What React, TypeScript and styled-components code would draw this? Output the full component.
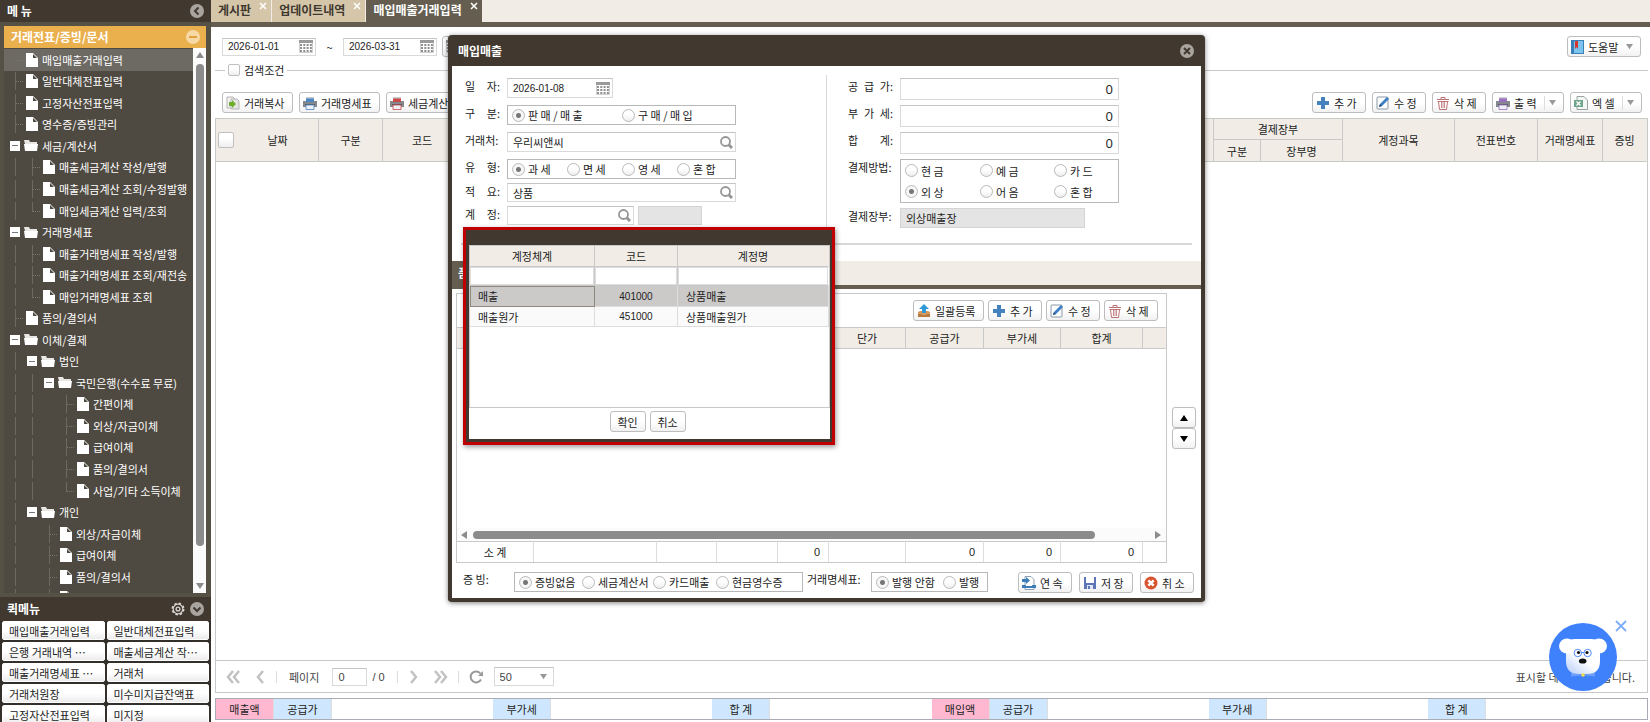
import React from 'react';
import styled, { createGlobalStyle, css } from 'styled-components';

const KOR = '"Noto Sans CJK KR", sans-serif';
const NUM = '"Liberation Sans", "Noto Sans CJK KR", sans-serif';
const DARK = '#413930';
const OLIVE = '#655e50';
const CREAM = '#f1ede6';
const LINE = '#c9c9c9';

const GlobalStyle = createGlobalStyle`
  *, *::before, *::after { box-sizing: border-box; }
  html, body { margin: 0; padding: 0; }
  body { font: 11px/14px ${KOR}; color: #222; background: #fff; overflow: hidden; }
  button, input, select { font: inherit; color: inherit; margin: 0; padding: 0; }
  button { cursor: pointer; }
  table { border-collapse: separate; border-spacing: 0; table-layout: fixed; width: 100%; }
  th { font-weight: 400; padding: 0; }
  td { padding: 0; }
  svg { display: block; flex: none; }
`;

/* ---------- icons ---------- */

const CircleIcon = ({ d, bg = '#a9a49d', fg = DARK }: { d: string; bg?: string; fg?: string }) => (
  <svg width="14" height="14" viewBox="0 0 14 14">
    <circle cx="7" cy="7" r="7" fill={bg} />
    <path d={d} fill="none" stroke={fg} strokeWidth="2" />
  </svg>
);

const GearIcon = () => (
  <svg width="14" height="14" viewBox="0 0 14 14" fill="none" stroke="#d8d5d0">
    <circle cx="7" cy="7" r="5.6" strokeWidth="1.8" strokeDasharray="2.4 2" />
    <circle cx="7" cy="7" r="4.8" strokeWidth="1.2" />
    <circle cx="7" cy="7" r="1.9" strokeWidth="1.3" />
  </svg>
);

const DocIcon = () => (
  <svg width="12" height="14" viewBox="0 0 12 14">
    <path d="M0 0h7l5 5v9H0z" fill="#fff" />
    <path d="M7 1v4h4z" fill="#4f4a41" />
  </svg>
);

const FolderIcon = () => (
  <svg width="14" height="11" viewBox="0 0 14 11">
    <path d="M0 0h5l1 2h7v2H1z" fill="#e9e7e4" />
    <path d="M0 4h14l-1 7H1z" fill="#fff" />
  </svg>
);

const CalendarIcon = () => (
  <svg width="14" height="13" viewBox="0 0 14 13">
    <path d="M0 0h14v3H0z" fill="#9a9a9a" />
    <path d="M.5 3v9.500h13V3" fill="none" stroke="#cfcfcf" />
    {[4, 7, 10].map((y) => (
      <path key={y} d={`M1 ${y + 1}h12`} stroke="#8f8f8f" strokeWidth="2" strokeDasharray="2 1.300" />
    ))}
  </svg>
);

const SearchIcon = () => (
  <svg width="13" height="13" viewBox="0 0 13 13" fill="none" stroke="#969696">
    <circle cx="5.500" cy="5.500" r="4.500" strokeWidth="1.800" />
    <path d="M8.500 8.500l3.500 3.500" strokeWidth="3" />
  </svg>
);

const PlusIcon = () => (
  <svg width="14" height="14" viewBox="0 0 14 14">
    <path d="M5 1h4v4h4v4H9v4H5V9H1V5h4z" fill="#4582bd" />
  </svg>
);

const EditIcon = () => (
  <svg width="14" height="14" viewBox="0 0 14 14">
    <rect x="1" y="1" width="11" height="12" rx="1" fill="#fafcfe" stroke="#8c98a3" />
    <path d="M3 11l1-3 7-7 2 2-7 7z" fill="#3d7fc4" />
    <path d="M3 11l1-3 2 2z" fill="#28496e" />
  </svg>
);

const TrashIcon = () => (
  <svg width="14" height="14" viewBox="0 0 14 14" fill="none" stroke="#bd7376">
    <path d="M1 3.500h12M5 3V1.500h4V3M2.500 5.500l1 8h7l1-8z" />
    <path d="M5.500 6v6M8.500 6v6M7 6v6" strokeWidth=".8" />
    <path d="M1.500 5.500h11" />
  </svg>
);

const PrinterIcon = ({ color }: { color: string }) => (
  <svg width="14" height="14" viewBox="0 0 14 14">
    <path d="M3 1h8v5H3z" fill={color} />
    <path d="M3 1h8v1.500H3z" fill="#c9ccd0" />
    <path d="M0 5h3v1h8V5h3v6H0z" fill="#85888c" />
    <path d="M2 8h10v1H2z" fill="#55585c" />
    <path d="M3 9h8v4.500H3z" fill="#eef2f8" stroke={color} strokeWidth=".8" />
  </svg>
);

const CopyIcon = () => (
  <svg width="14" height="14" viewBox="0 0 14 14">
    <path d="M1 1h6l2 2v9H1z" fill="#f1f1f1" stroke="#b5b5b5" />
    <path d="M5 3h6l2 2v8H5z" fill="#e3e6e2" stroke="#b5b5b5" />
    <path d="M3 6h3V4l4 4-4 4v-2H3z" fill="#6fae2c" />
  </svg>
);

const ExcelIcon = () => (
  <svg width="14" height="14" viewBox="0 0 14 14">
    <path d="M3 .5h7L13.500 4v9.500H3z" fill="#f5f7f6" stroke="#9aa39d" />
    <path d="M0 4h9v7H0z" fill="#6fa58b" />
    <path d="M2.500 5.500l4 4M6.500 5.500l-4 4" stroke="#fff" strokeWidth="1.300" />
  </svg>
);

const BookIcon = () => (
  <svg width="13" height="14" viewBox="0 0 13 14">
    <rect x=".5" y=".5" width="12" height="13" fill="#7cc4ee" stroke="#3b7fb8" />
    <path d="M1 1h2v12H1z" fill="#3b7fb8" />
    <path d="M4 1h3v8L5.500 7 4 9z" fill="#d5352c" />
  </svg>
);

const UploadIcon = () => (
  <svg width="14" height="14" viewBox="0 0 14 14">
    <path d="M1 8l2-1h8l2 1v5H1z" fill="#d59a5b" />
    <path d="M1 10h3l1 1h4l1-1h3v3H1z" fill="#b97a3d" />
    <path d="M7 0l5 5H9v4H5V5H2z" fill="#2f9ad6" />
  </svg>
);

const ContinueIcon = () => (
  <svg width="14" height="14" viewBox="0 0 14 14">
    <path d="M3 .5h6l3 3v10H3z" fill="#fff" stroke="#8aa0b5" />
    <path d="M0 3h4V1l4 3.500L4 8V6H0z" fill="#3d7db8" />
    <path d="M0 9h14v3H0z" fill="#3d7db8" />
    <path d="M4 9h6v1H4z" fill="#fff" />
  </svg>
);

const SaveIcon = () => (
  <svg width="14" height="14" viewBox="0 0 14 14">
    <path d="M1 1h12v12H1z" fill="#5b75b8" />
    <path d="M3 1h8v6H3z" fill="#fff" />
    <path d="M4 9h6v4H4z" fill="#dfe5f3" />
    <path d="M5 10h2v3H5z" fill="#5b75b8" />
  </svg>
);

const CancelIcon = () => (
  <svg width="14" height="14" viewBox="0 0 14 14">
    <circle cx="7" cy="7" r="6.500" fill="#d9532f" />
    <path d="M4.300 4.300l5.400 5.400M9.700 4.300L4.300 9.700" stroke="#fff" strokeWidth="2.400" />
  </svg>
);

const Caret = ({ dir = 'down', size = 7, color = '#999' }: { dir?: string; size?: number; color?: string }) => {
  const d: Record<string, string> = {
    down: 'M0 1h8L4 7z',
    up: 'M0 7h8L4 1z',
    left: 'M7 0v8L1 4z',
    right: 'M1 0v8l6-4z',
  };
  return (
    <svg width={size} height={size} viewBox="0 0 8 8">
      <path d={d[dir]} fill={color} />
    </svg>
  );
};

const PageArrow = ({ d, w }: { d: string; w: number }) => (
  <svg width={w} height="14" viewBox={`0 0 ${w} 14`} fill="none" stroke="#c2c2c2" strokeWidth="2.500">
    <path d={d} />
  </svg>
);

const RefreshIcon = () => (
  <svg width="15" height="14" viewBox="0 0 15 14">
    <path d="M11.500 3.500A5.500 5.500 0 1 0 12 9.500" fill="none" stroke="#999" strokeWidth="2" />
    <path d="M14 1v5H9z" fill="#999" />
  </svg>
);

const Mascot = () => (
  <svg width="68" height="68" viewBox="0 0 68 68">
    <defs>
      <linearGradient id="face" x1=".7" y1=".3" x2=".2" y2="1">
        <stop offset="0.4" stopColor="#fff" />
        <stop offset="1" stopColor="#c3d5fb" />
      </linearGradient>
    </defs>
    <circle cx="34" cy="34" r="34" fill="#3f80fb" />
    <path d="M22 49l12 3 12-3v4.500l-12-1-12 1z" fill="#6a9dfc" />
    <path d="M17 22q2-6 8-6h18q6 0 8 6v16q0 13-13 13h-8q-13 0-13-13z" fill="url(#face)" />
    <ellipse cx="18" cy="23" rx="8" ry="7.500" fill="#fff" />
    <ellipse cx="50" cy="23" rx="8" ry="7.500" fill="#fff" />
    <g fill="#fff" stroke="#3f80fb" strokeWidth=".9">
      <circle cx="28.800" cy="30" r="3.700" />
      <circle cx="38.600" cy="30" r="3.700" />
      <path d="M32.500 29.500h2.400" />
    </g>
    <circle cx="29.500" cy="29.500" r="1.600" fill="#111" />
    <circle cx="38" cy="29.500" r="1.600" fill="#111" />
    <ellipse cx="33.700" cy="38" rx="3.800" ry="2.600" fill="#111" />
    <circle cx="34" cy="52" r="1.800" fill="#f3dc4c" />
  </svg>
);

/* ---------- shared controls ---------- */

const Button = styled.button<{ $w?: number; $center?: boolean }>`
  display: flex;
  align-items: center;
  justify-content: ${(p) => (p.$center ? 'center' : 'flex-start')};
  gap: 4px;
  flex: none;
  height: 21px;
  width: ${(p) => (p.$w ? `${p.$w}px` : 'auto')};
  padding: 0 ${(p) => (p.$center ? 0 : 3)}px;
  border: 1px solid #bdbdbd;
  border-radius: 3px;
  background: linear-gradient(#fff 50%, #f1f1f1);
  white-space: nowrap;
`;

const ButtonCaret = styled.span<{ $split?: boolean }>`
  display: flex;
  align-items: center;
  height: 14px;
  margin-left: auto;
  padding: 0 4px;
  border-left: ${(p) => (p.$split ? '1px solid #ddd' : '0')};
`;

const IconButton = styled.button`
  display: flex;
  flex: none;
  border: 0;
  background: none;
`;

const fieldBox = css`
  border: 1px solid #d9d9d9;
  border-top-color: #c4c4c4;
  background: #fff;
`;

const Field = styled.div<{ $w?: number; $h: number }>`
  ${fieldBox}
  display: flex;
  align-items: center;
  flex: none;
  width: ${(p) => (p.$w ? `${p.$w}px` : 'auto')};
  height: ${(p) => p.$h}px;
  padding: 0 2px 0 5px;
`;

const FieldInput = styled.input<{ $num?: boolean }>`
  flex: 1;
  min-width: 0;
  height: 100%;
  border: 0;
  outline: 0;
  background: none;
  ${(p) => p.$num && `font-family: ${NUM}; font-size: 10px;`}
`;

const AmountInput = styled.input`
  ${fieldBox}
  width: 219px;
  height: 22px;
  padding: 0 5px;
  text-align: right;
  font: 13px/20px "Open Sans", sans-serif;
`;

const ReadonlyInput = styled.input<{ $w: number; $h: number }>`
  width: ${(p) => p.$w}px;
  height: ${(p) => p.$h}px;
  padding: 0 5px;
  border: 1px solid #d4d4d4;
  background: #e4e4e4;
`;

const Tick = styled.input<{ $size: number }>`
  appearance: none;
  flex: none;
  display: block;
  width: ${(p) => p.$size}px;
  height: ${(p) => p.$size}px;
  border: 1px solid #c0c0c0;
  border-radius: 2px;
  background: linear-gradient(#fff 40%, #eee);
`;

const RadioInput = styled.input`
  appearance: none;
  flex: none;
  width: 13px;
  height: 13px;
  border: 1px solid #b9b9b9;
  border-radius: 50%;
  background: linear-gradient(#fff 40%, #eee);
  &:checked {
    background: radial-gradient(circle, #777 0 2px, #f6f6f6 3px);
  }
`;

const RadioLabel = styled.label`
  display: flex;
  align-items: center;
  gap: 3px;
  white-space: nowrap;
`;

const RadioBox = styled.div<{ $cols: string; $w: number; $h?: number }>`
  display: grid;
  grid-template-columns: ${(p) => p.$cols};
  align-items: center;
  flex: none;
  width: ${(p) => p.$w}px;
  height: ${(p) => p.$h ?? 20}px;
  padding-left: 4px;
  border: 1px solid #b8b8b8;
`;

type RadiosProps = { name: string; items: string[]; value: string; cols: string; w: number; h?: number };
const Radios = ({ name, items, value, cols, w, h }: RadiosProps) => (
  <RadioBox role="radiogroup" aria-label={name} $cols={cols} $w={w} $h={h}>
    {items.map((t) => (
      <RadioLabel key={t}>
        <RadioInput type="radio" name={name} defaultChecked={t === value} />
        {t}
      </RadioLabel>
    ))}
  </RadioBox>
);

const DateField = ({ id, label, value, w, h }: { id: string; label?: string; value: string; w: number; h: number }) => (
  <Field $w={w} $h={h}>
    <FieldInput id={id} aria-label={label} $num defaultValue={value} />
    <IconButton type="button" aria-label="달력"><CalendarIcon /></IconButton>
  </Field>
);

/* ---------- shell ---------- */

const Shell = styled.div`
  display: grid;
  grid-template-columns: 211px 1fr;
  height: 100vh;
  overflow: hidden;
`;

const Sidebar = styled.aside`
  display: flex;
  flex-direction: column;
  min-height: 0;
  background: #555145;
  color: #fff;
`;

const SideHeader = styled.header<{ $h: number }>`
  display: flex;
  align-items: center;
  gap: 5px;
  flex: none;
  height: ${(p) => p.$h}px;
  padding: 0 7px;
  background: ${DARK};
  h2 { flex: 1; margin: 0; font-size: 12px; line-height: 16px; font-weight: 700; }
`;

const Accordion = styled.section`
  display: flex;
  flex-direction: column;
  flex: 1;
  min-height: 0;
  margin: 4px 5px 4px 4px;
`;

const AccordionTitle = styled.button`
  display: flex;
  align-items: center;
  justify-content: space-between;
  flex: none;
  height: 22px;
  padding: 0 6px 0 7px;
  border: 0;
  background: #eab04e;
  font-size: 12px;
  font-weight: 700;
`;

const TreeArea = styled.div`
  display: flex;
  flex: 1;
  min-height: 0;
  background: #4f4a41;
`;

const TreeClip = styled.div`
  flex: 1;
  min-width: 0;
  overflow: hidden;
`;

const TreeList = styled.ul`
  display: grid;
  grid-auto-rows: 1fr;
  height: 561px;
  margin: 0;
  padding: 1px 0 0;
  list-style: none;
`;

const TreeRow = styled.li<{ $on?: boolean }>`
  display: flex;
  align-items: center;
  padding-left: 3px;
  overflow: hidden;
  white-space: nowrap;
  background: ${(p) => (p.$on ? '#6d6a64' : 'none')};
  a { color: #fff; text-decoration: none; }
`;

const Guide = styled.span<{ $kind: string }>`
  flex: none;
  width: 17px;
  height: 18px;
  background:
    ${(p) => (p.$kind === 'T' || p.$kind === 'L'
      ? 'repeating-linear-gradient(90deg, #7a756b 0 1px, transparent 1px 2px) 9px 9px / 7px 1px no-repeat,' : '')}
    linear-gradient(#6e695f, #6e695f) 8px 0 / ${(p) => (p.$kind === '.' ? '0px' : '1px')}
    ${(p) => (p.$kind === 'L' ? '10px' : '18px')} no-repeat;
`;

const Toggle = styled.button`
  flex: none;
  display: grid;
  place-items: center;
  width: 10px;
  height: 10px;
  margin: 0 4px 0 3px;
  border: 0;
  background: #fff;
  &::before { content: ''; width: 6px; height: 1px; background: #777; }
`;

const TreeIcon = styled.span<{ $doc: boolean }>`
  display: flex;
  flex: none;
  width: 18px;
  padding-left: ${(p) => (p.$doc ? 2 : 0)}px;
`;

const ScrollY = styled.div`
  display: flex;
  flex-direction: column;
  align-items: center;
  gap: 5px;
  width: 13px;
  padding: 3px 0;
  background: #fbfbfb;
`;

const ScrollYTrack = styled.div`
  flex: 1;
  display: flex;
  &::before { content: ''; width: 8px; height: 94%; border-radius: 4px; background: #8b8b8b; }
`;

const QuickMenu = styled.section`
  flex: none;
  height: 125px;
  overflow: hidden;
  background: #33302b;
`;

const QuickGrid = styled.div`
  display: grid;
  grid-template-columns: repeat(2, minmax(0, 1fr));
  gap: 2px;
  padding: 0 2px;
`;

const QuickButton = styled.button`
  height: 19px;
  padding: 0 6px;
  border: 1px solid #fff;
  border-radius: 2px;
  background: linear-gradient(#fff 50%, #ececec);
  color: #222;
  text-align: left;
  white-space: nowrap;
`;

/* V: line, T: branch, L: last branch, '.': blank; folders end in a toggle */
const tree: [string, string, boolean?][] = [
  ['T', '매입매출거래입력'],
  ['T', '일반대체전표입력'],
  ['T', '고정자산전표입력'],
  ['T', '영수증/증빙관리'],
  ['', '세금/계산서', true],
  ['VT', '매출세금계산 작성/발행'],
  ['VT', '매출세금계산 조회/수정발행'],
  ['VL', '매입세금계산 입력/조회'],
  ['', '거래명세표', true],
  ['VT', '매출거래명세표 작성/발행'],
  ['VT', '매출거래명세표 조회/재전송'],
  ['VL', '매입거래명세표 조회'],
  ['T', '품의/결의서'],
  ['', '이체/결제', true],
  ['V', '법인', true],
  ['VV', '국민은행(수수료 무료)', true],
  ['VV.T', '간편이체'],
  ['VV.T', '외상/자금이체'],
  ['VV.T', '급여이체'],
  ['VV.T', '품의/결의서'],
  ['VV.L', '사업/기타 소득이체'],
  ['V', '개인', true],
  ['V.T', '외상/자금이체'],
  ['V.T', '급여이체'],
  ['V.T', '품의/결의서'],
  ['V.L', ''],
];

const quick = [
  '매입매출거래입력', '일반대체전표입력', '은행 거래내역 ⋯', '매출세금계산 작⋯', '매출거래명세표 ⋯',
  '거래처', '거래처원장', '미수미지급잔액표', '고정자산전표입력', '미지정',
];

const SideMenu = () => (
  <Sidebar>
    <SideHeader $h={22}>
      <h2>메 뉴</h2>
      <IconButton aria-label="메뉴 접기"><CircleIcon d="M8.500 3.500L5 7l3.500 3.500" /></IconButton>
    </SideHeader>
    <Accordion>
      <AccordionTitle>
        거래전표/증빙/문서
        <CircleIcon d="M3 7h8" bg="#f6d9a4" fg="#e0a03a" />
      </AccordionTitle>
      <TreeArea>
        <TreeClip>
          <TreeList>
            {tree.map(([guides, text, folder], i) => (
              <TreeRow key={i} $on={i === 0}>
                {guides.split('').map((g, k) => <Guide key={k} $kind={g} />)}
                {folder && <Toggle aria-label={`${text} 접기`} />}
                <TreeIcon $doc={!folder}>{folder ? <FolderIcon /> : <DocIcon />}</TreeIcon>
                {text && <a href="#menu">{text}</a>}
              </TreeRow>
            ))}
          </TreeList>
        </TreeClip>
        <ScrollY>
          <Caret dir="up" size={8} color="#8b8b8b" />
          <ScrollYTrack />
          <Caret size={8} color="#8b8b8b" />
        </ScrollY>
      </TreeArea>
    </Accordion>
    <QuickMenu>
      <SideHeader $h={24}>
        <h2>퀵메뉴</h2>
        <IconButton aria-label="설정"><GearIcon /></IconButton>
        <IconButton aria-label="퀵메뉴 접기"><CircleIcon d="M3.500 5.500L7 9l3.500-3.500" /></IconButton>
      </SideHeader>
      <QuickGrid>
        {quick.map((q) => <QuickButton key={q}>{q}</QuickButton>)}
      </QuickGrid>
    </QuickMenu>
  </Sidebar>
);

/* ---------- main page ---------- */

const Main = styled.main`
  display: flex;
  flex-direction: column;
  min-width: 0;
  min-height: 0;
`;

const TabBar = styled.nav`
  display: flex;
  gap: 1px;
  flex: none;
  height: 27px;
  border-bottom: 5px solid ${OLIVE};
  background: ${CREAM};
`;

const PageTab = styled.div<{ $on?: boolean }>`
  display: flex;
  align-items: flex-start;
  gap: 8px;
  padding: 2px 4px 0 7px;
  background: ${(p) => (p.$on ? OLIVE : '#d5c6aa')};
  a {
    color: ${(p) => (p.$on ? '#fff' : '#3f382f')};
    font-size: 12px;
    line-height: 16px;
    font-weight: 700;
    text-decoration: none;
  }
  button { display: flex; border: 0; background: none; }
`;

const CloseX = () => (
  <svg width="8" height="8" viewBox="0 0 8 8"><path d="M1 1l6 6M7 1L1 7" stroke="#fff" strokeWidth="1.500" /></svg>
);

const Content = styled.div`
  display: flex;
  flex-direction: column;
  flex: 1;
  min-height: 0;
  padding: 9px 2px 2px 4px;
`;

const SearchRow = styled.div`
  display: flex;
  align-items: center;
  gap: 5px;
  height: 21px;
  padding: 0 7px;
`;

const Tilde = styled.span`
  width: 17px;
  text-align: center;
`;

const Spacer = styled.span`
  flex: 1;
`;

const SearchFieldset = styled.fieldset`
  margin: 6px 0 0;
  padding: 0;
  border: 0;
  border-top: 1px solid ${LINE};
  legend { margin-left: 10px; padding: 0 3px; }
  label { display: flex; align-items: center; gap: 4px; }
`;

const Toolbar = styled.div`
  display: flex;
  gap: 6px;
  margin: 15px 0 5px;
  padding: 0 6px 0 7px;
`;

const GridPanel = styled.section`
  display: flex;
  flex-direction: column;
  flex: 1;
  min-height: 0;
  border: 1px solid ${LINE};
`;

const HeadTable = styled.table`
  th {
    height: 22px;
    border-right: 1px solid ${LINE};
    border-bottom: 1px solid ${LINE};
    background: ${CREAM};
    white-space: nowrap;
  }
  th:last-child { border-right-color: transparent; }
`;

const MainHead = styled(HeadTable)`
  tr:first-child th { height: 21px; }
  th.tick { border-right: 0; padding-left: 2px; }
  tr:last-child th:last-child { border-right-color: ${LINE}; }
`;

const GridBody = styled.div`
  flex: 1;
`;

const Pager = styled.div`
  display: flex;
  align-items: center;
  height: 32px;
  padding: 0 12px 0 10px;
  border-top: 1px solid ${LINE};
  color: #444;
`;

const PagerStep = styled(IconButton)<{ $ml?: number }>`
  margin-left: ${(p) => p.$ml ?? 0}px;
`;

const PagerSep = styled.span<{ $tight?: boolean }>`
  width: 1px;
  height: 12px;
  margin: 0 ${(p) => (p.$tight ? 10 : 12)}px;
  background: #ddd;
`;

const PagerLabel = styled.label`
  display: flex;
  align-items: center;
  gap: 13px;
`;

const PageInput = styled.input`
  ${fieldBox}
  width: 35px;
  height: 18px;
  padding-left: 5px;
  font: 11px ${NUM};
`;

const PageTotal = styled.span`
  margin-left: 5px;
  font: 11px ${NUM};
`;

const SizeSelect = styled.div`
  ${fieldBox}
  display: grid;
  align-items: center;
  width: 60px;
  height: 19px;
  margin-left: 10px;
  select {
    grid-area: 1 / 1;
    appearance: none;
    width: 100%;
    padding-left: 5px;
    border: 0;
    background: none;
    font: 11px ${NUM};
  }
  svg { grid-area: 1 / 1; justify-self: end; margin-right: 6px; pointer-events: none; }
`;

const Summary = styled.dl`
  display: grid;
  grid-template-columns: 58px repeat(3, 58px 1fr) 58px repeat(3, 58px 1fr);
  flex: none;
  height: 22px;
  margin: 5px 0 0;
  border: 1px solid #aaacb5;
  dd { margin: 0; }
`;

const SummaryTag = styled.dt<{ $pink?: boolean }>`
  display: grid;
  place-items: center;
  border-right: 1px solid #ddd;
  background: ${(p) => (p.$pink ? '#ffb8d0' : '#cfe7fe')};
`;

const SummaryHalf = ({ title }: { title: string }) => (
  <>
    <SummaryTag $pink>{title}</SummaryTag>
    <SummaryTag>공급가</SummaryTag><dd />
    <SummaryTag>부가세</SummaryTag><dd />
    <SummaryTag>합 계</SummaryTag><dd />
  </>
);

const MainPage = () => (
  <Main>
    <TabBar>
      {['게시판', '업데이트내역', '매입매출거래입력'].map((t, i) => (
        <PageTab key={t} $on={i === 2}>
          <a href="#tab">{t}</a>
          <button aria-label={`${t} 닫기`}><CloseX /></button>
        </PageTab>
      ))}
    </TabBar>
    <Content>
      <SearchRow>
        <DateField id="from" label="시작일" value="2026-01-01" w={94} h={18} />
        <Tilde>~</Tilde>
        <DateField id="to" label="종료일" value="2026-03-31" w={94} h={18} />
        <Button $w={54} aria-label="기간 선택"><CalendarIcon /></Button>
        <Spacer />
        <Button $w={74}>
          <BookIcon />도움말<ButtonCaret><Caret /></ButtonCaret>
        </Button>
      </SearchRow>
      <SearchFieldset>
        <legend>
          <label><Tick type="checkbox" $size={12} />검색조건</label>
        </legend>
      </SearchFieldset>
      <Toolbar>
        <Button $w={71}><CopyIcon />거래복사</Button>
        <Button $w={81}><PrinterIcon color="#4b86c6" />거래명세표</Button>
        <Button $w={81}><PrinterIcon color="#cc4a4a" />세금계산서</Button>
        <Spacer />
        <Button $w={54}><PlusIcon />추 가</Button>
        <Button $w={54}><EditIcon />수 정</Button>
        <Button $w={54}><TrashIcon />삭 제</Button>
        <Button $w={72}><PrinterIcon color="#9a6cc0" />출 력<ButtonCaret $split><Caret /></ButtonCaret></Button>
        <Button $w={72}><ExcelIcon />엑 셀<ButtonCaret $split><Caret /></ButtonCaret></Button>
      </Toolbar>
      <GridPanel>
        <MainHead>
          <colgroup>
            {[21, 82, 64, 79, 0, 47, 82, 112, 83, 65, 44].map((w, i) => <col key={i} width={w || undefined} />)}
          </colgroup>
          <thead>
            <tr>
              <th className="tick" rowSpan={2}><Tick type="checkbox" aria-label="전체 선택" $size={16} /></th>
              <th rowSpan={2}>날짜</th>
              <th rowSpan={2}>구분</th>
              <th rowSpan={2}>코드</th>
              <th rowSpan={2} />
              <th colSpan={2}>결제장부</th>
              <th rowSpan={2}>계정과목</th>
              <th rowSpan={2}>전표번호</th>
              <th rowSpan={2}>거래명세표</th>
              <th rowSpan={2}>증빙</th>
            </tr>
            <tr>
              <th>구분</th>
              <th>장부명</th>
            </tr>
          </thead>
        </MainHead>
        <GridBody />
        <Pager>
          <PagerStep aria-label="처음"><PageArrow w={14} d="M7 1L2 7l5 6M13 1L8 7l5 6" /></PagerStep>
          <PagerStep aria-label="이전" $ml={16}><PageArrow w={8} d="M7 1L2 7l5 6" /></PagerStep>
          <PagerSep />
          <PagerLabel>페이지<PageInput defaultValue="0" /></PagerLabel>
          <PageTotal>/ 0</PageTotal>
          <PagerSep />
          <PagerStep aria-label="다음"><PageArrow w={8} d="M1 1l5 6-5 6" /></PagerStep>
          <PagerStep aria-label="마지막" $ml={16}><PageArrow w={14} d="M1 1l5 6-5 6M7 1l5 6-5 6" /></PagerStep>
          <PagerSep $tight />
          <PagerStep aria-label="새로고침"><RefreshIcon /></PagerStep>
          <SizeSelect>
            <select aria-label="페이지 크기" defaultValue="50"><option>50</option><option>100</option></select>
            <Caret />
          </SizeSelect>
          <Spacer />
          표시할 데이터가 없습니다.
        </Pager>
      </GridPanel>
      <Summary>
        <SummaryHalf title="매출액" />
        <SummaryHalf title="매입액" />
      </Summary>
    </Content>
  </Main>
);

/* ---------- entry dialog ---------- */

const Overlay = styled.div`
  position: absolute;
  inset: 0;
  display: flex;
  justify-content: center;
  align-items: flex-start;
  padding: 35px 0 0 3px;
`;

const Dialog = styled.section`
  position: relative;
  flex: none;
  width: 757px;
  border: 4px solid ${DARK};
  border-top: 0;
  border-radius: 4px;
  background: #fff;
  box-shadow: 0 1px 5px rgba(0, 0, 0, 0.5);
`;

const DialogTitle = styled.header`
  display: flex;
  align-items: center;
  justify-content: space-between;
  height: 31px;
  padding: 0 7px 0 6px;
  background: ${DARK};
  h1 { margin: 0; color: #fff; font-size: 12px; line-height: 16px; }
`;

const FormArea = styled.form`
  display: flex;
  margin: 9px 9px 0;
  border-bottom: 2px solid #d8d8d8;
`;

const FormLeft = styled.div`
  display: flex;
  flex-direction: column;
  gap: 4px;
  width: 366px;
  padding: 3px 0 0 4px;
  border-right: 1px solid #d8d8d8;
`;

const FormRows = styled.div<{ $gap: number }>`
  display: flex;
  flex-direction: column;
  gap: ${(p) => p.$gap}px;
`;

const FormRight = styled.div`
  padding: 3px 0 15px 21px;
`;

const FormRow = styled.div`
  display: flex;
  align-items: flex-start;
  gap: 7px;
`;

const FieldPair = styled.div`
  display: flex;
  gap: 4px;
`;

const RowLabel = styled.label<{ $w: number }>`
  flex: none;
  width: ${(p) => p.$w}px;
  padding-top: 1px;
  text-align: justify;
  text-align-last: justify;
  white-space: nowrap;
`;

const DetailTabs = styled.div`
  display: flex;
  height: 28px;
  margin-top: 16px;
  border-bottom: 4px solid ${OLIVE};
  background: ${CREAM};
  button {
    width: 60px;
    padding: 0 6px;
    border: 0;
    background: ${OLIVE};
    color: #fff;
    font-size: 12px;
    font-weight: 700;
    text-align: left;
  }
`;

const DetailArea = styled.div`
  display: flex;
  align-items: center;
  gap: 5px;
  padding: 4px 5px 0 4px;
`;

const DetailPanel = styled.section`
  flex: 1;
  min-width: 0;
  border: 1px solid ${LINE};
`;

const DetailTools = styled.div`
  display: flex;
  justify-content: flex-end;
  gap: 4px;
  height: 33px;
  padding: 6px 8px 0;
`;

const DetailHead = styled(HeadTable)`
  th { border-top: 1px solid ${LINE}; }
`;

const DetailBody = styled.div`
  height: 179px;
`;

const ScrollX = styled.div`
  display: flex;
  align-items: center;
  gap: 5px;
  height: 13px;
  padding: 0 4px 0 3px;
  background: #fbfbfb;
`;

const ScrollXTrack = styled.div`
  flex: 1;
  &::before { content: ''; display: block; width: 92%; height: 8px; border-radius: 4px; background: #8b8b8b; }
`;

const FootTable = styled.table`
  th, td {
    height: 21px;
    border-top: 1px solid ${LINE};
    border-right: 1px solid #ddd;
  }
  td { padding-right: 8px; text-align: right; font: 11px ${NUM}; }
  td:last-child { border-right: 0; }
`;

const MoveButtons = styled.div`
  display: flex;
  flex-direction: column;
  width: 24px;
`;

const DialogFoot = styled.footer`
  display: flex;
  align-items: flex-start;
  gap: 4px;
  padding: 9px 7px 5px 11px;
`;

const FootButtons = styled.div`
  display: flex;
  gap: 7px;
  margin-left: auto;
`;

const FootLabel = styled.span<{ $w: number }>`
  flex: none;
  width: ${(p) => p.$w}px;
  white-space: nowrap;
`;

const cols = [77, 123, 60, 61, 51, 77, 78, 77, 82, 23];
const ColGroup = ({ widths }: { widths: number[] }) => (
  <colgroup>{widths.map((w, i) => <col key={i} width={w || undefined} />)}</colgroup>
);

const SearchField = ({ id, value, w, h }: { id: string; value?: string; w: number; h: number }) => (
  <Field $w={w} $h={h}>
    <FieldInput id={id} defaultValue={value} />
    <IconButton type="button" aria-label="검색"><SearchIcon /></IconButton>
  </Field>
);

/* ---------- account picker ---------- */

const Picker = styled.section`
  position: absolute;
  left: 11px;
  top: 192px;
  width: 372px;
  padding: 15px 2px 3px 3px;
  border: 3px solid #c00000;
  background: ${DARK};
  box-shadow: 1px 2px 5px rgba(0, 0, 0, 0.4);
`;

const PickerList = styled.div`
  height: 163px;
  border: 1px solid ${LINE};
  background: #fff;
`;

const PickerTable = styled(HeadTable)`
  thead tr:first-child th { height: 21px; }
  thead tr:last-child th { height: 19px; background: #fff; }
  thead input { display: block; width: 100%; height: 18px; border: 1px solid #ddd; outline: 0; }
  td {
    height: 20px;
    padding: 0 8px;
    border-right: 1px solid #ddd;
    border-bottom: 1px solid #ddd;
    background: #fafafa;
  }
  td.code { text-align: center; font: 10px ${NUM}; }
  tr.on td { height: 21px; background: #cccac8; }
  tr.on td:first-child { outline: 1px solid #8e8a80; outline-offset: -1px; }
`;

const PickerFoot = styled.div`
  display: flex;
  justify-content: center;
  gap: 4px;
  height: 31px;
  padding: 3px 4px 0 0;
  background: #fff;
`;

const AccountPicker = () => (
  <Picker role="dialog" aria-label="계정 선택">
    <PickerList>
      <PickerTable>
        <ColGroup widths={[125, 83, 0]} />
        <thead>
          <tr><th>계정체계</th><th>코드</th><th>계정명</th></tr>
          <tr>
            {['계정체계', '코드', '계정명'].map((t) => <th key={t}><input aria-label={`${t} 찾기`} /></th>)}
          </tr>
        </thead>
        <tbody>
          <tr className="on"><td>매출</td><td className="code">401000</td><td>상품매출</td></tr>
          <tr><td>매출원가</td><td className="code">451000</td><td>상품매출원가</td></tr>
        </tbody>
      </PickerTable>
    </PickerList>
    <PickerFoot>
      <Button $w={36} $center>확인</Button>
      <Button $w={36} $center>취소</Button>
    </PickerFoot>
  </Picker>
);

const EntryDialog = () => (
  <Overlay>
    <Dialog role="dialog" aria-label="매입매출">
      <DialogTitle>
        <h1>매입매출</h1>
        <IconButton aria-label="닫기"><CircleIcon d="M4 4l6 6M10 4l-6 6" /></IconButton>
      </DialogTitle>
      <FormArea>
        <FormLeft>
          <FormRows $gap={7}>
            <FormRow>
              <RowLabel $w={35} htmlFor="date">일 자:</RowLabel>
              <DateField id="date" value="2026-01-08" w={106} h={20} />
            </FormRow>
            <FormRow>
              <RowLabel $w={35} as="span">구 분:</RowLabel>
              <Radios name="구분" items={['판 매 / 매 출', '구 매 / 매 입']} value="판 매 / 매 출" cols="110px 1fr" w={229} />
            </FormRow>
            <FormRow>
              <RowLabel $w={35} htmlFor="client">거래처:</RowLabel>
              <SearchField id="client" value="우리씨앤씨" w={229} h={20} />
            </FormRow>
            <FormRow>
              <RowLabel $w={35} as="span">유 형:</RowLabel>
              <Radios name="유형" items={['과 세', '면 세', '영 세', '혼 합']} value="과 세" cols="repeat(4, 55px)" w={229} />
            </FormRow>
          </FormRows>
          <FormRows $gap={4}>
            <FormRow>
              <RowLabel $w={35} htmlFor="memo">적 요:</RowLabel>
              <SearchField id="memo" value="상품" w={229} h={19} />
            </FormRow>
            <FormRow>
              <RowLabel $w={35} htmlFor="account">계 정:</RowLabel>
              <FieldPair>
                <SearchField id="account" w={127} h={19} />
                <ReadonlyInput aria-label="계정명" readOnly $w={64} $h={19} />
              </FieldPair>
            </FormRow>
          </FormRows>
        </FormLeft>
        <FormRight>
          <FormRows $gap={5}>
            {[['supply', '공 급 가:'], ['vat', '부 가 세:'], ['total', '합 계:']].map(([id, t]) => (
              <FormRow key={id}>
                <RowLabel $w={45} htmlFor={id}>{t}</RowLabel>
                <AmountInput id={id} defaultValue="0" />
              </FormRow>
            ))}
            <FormRow>
              <RowLabel $w={45} as="span">결제방법:</RowLabel>
              <Radios
                name="결제방법"
                items={['현 금', '예 금', '카 드', '외 상', '어 음', '혼 합']}
                value="외 상"
                cols="75px 74px 1fr"
                w={219}
                h={44}
              />
            </FormRow>
            <FormRow>
              <RowLabel $w={45} htmlFor="book">결제장부:</RowLabel>
              <ReadonlyInput id="book" readOnly defaultValue="외상매출장" $w={185} $h={20} />
            </FormRow>
          </FormRows>
        </FormRight>
      </FormArea>
      <DetailTabs><button>품목</button></DetailTabs>
      <DetailArea>
        <DetailPanel>
          <DetailTools>
            <Button $w={71}><UploadIcon />일괄등록</Button>
            <Button $w={54}><PlusIcon />추 가</Button>
            <Button $w={54}><EditIcon />수 정</Button>
            <Button $w={54}><TrashIcon />삭 제</Button>
          </DetailTools>
          <DetailHead>
            <ColGroup widths={cols} />
            <thead>
              <tr>
                <th /><th /><th /><th /><th />
                <th>단가</th><th>공급가</th><th>부가세</th><th>합계</th><th />
              </tr>
            </thead>
          </DetailHead>
          <DetailBody />
          <ScrollX>
            <Caret dir="left" size={8} color="#8b8b8b" />
            <ScrollXTrack />
            <Caret dir="right" size={8} color="#8b8b8b" />
          </ScrollX>
          <FootTable>
            <ColGroup widths={cols} />
            <tbody>
              <tr>
                <th scope="row">소 계</th><td /><td /><td /><td>0</td>
                <td /><td>0</td><td>0</td><td>0</td><td />
              </tr>
            </tbody>
          </FootTable>
        </DetailPanel>
        <MoveButtons>
          <Button $center aria-label="위로"><Caret dir="up" size={8} color="#000" /></Button>
          <Button $center aria-label="아래로"><Caret size={8} color="#000" /></Button>
        </MoveButtons>
      </DetailArea>
      <DialogFoot>
        <FootLabel $w={47}>증 빙:</FootLabel>
        <Radios
          name="증빙"
          items={['증빙없음', '세금계산서', '카드매출', '현금영수증']}
          value="증빙없음"
          cols="63px 71px 63px 1fr"
          w={289}
        />
        <FootLabel $w={60}>거래명세표:</FootLabel>
        <Radios name="거래명세표" items={['발행 안함', '발행']} value="발행 안함" cols="67px 1fr" w={117} />
        <FootButtons>
          <Button $w={54}><ContinueIcon />연 속</Button>
          <Button $w={54}><SaveIcon />저 장</Button>
          <Button $w={54}><CancelIcon />취 소</Button>
        </FootButtons>
      </DialogFoot>
      <AccountPicker />
    </Dialog>
  </Overlay>
);

/* ---------- help bot ---------- */

const BotButton = styled.button`
  position: absolute;
  right: 33px;
  bottom: 31px;
  border: 0;
  background: none;
`;

const BotClose = styled.button`
  position: absolute;
  right: 23px;
  bottom: 90px;
  border: 0;
  background: none;
`;

export default function App() {
  return (
    <>
      <GlobalStyle />
      <Shell>
        <SideMenu />
        <MainPage />
      </Shell>
      <EntryDialog />
      <BotButton aria-label="도우미"><Mascot /></BotButton>
      <BotClose aria-label="도우미 닫기">
        <svg width="12" height="12" viewBox="0 0 12 12"><path d="M1 1l10 10M11 1L1 11" stroke="#7fadfa" strokeWidth="1.800" /></svg>
      </BotClose>
    </>
  );
}
